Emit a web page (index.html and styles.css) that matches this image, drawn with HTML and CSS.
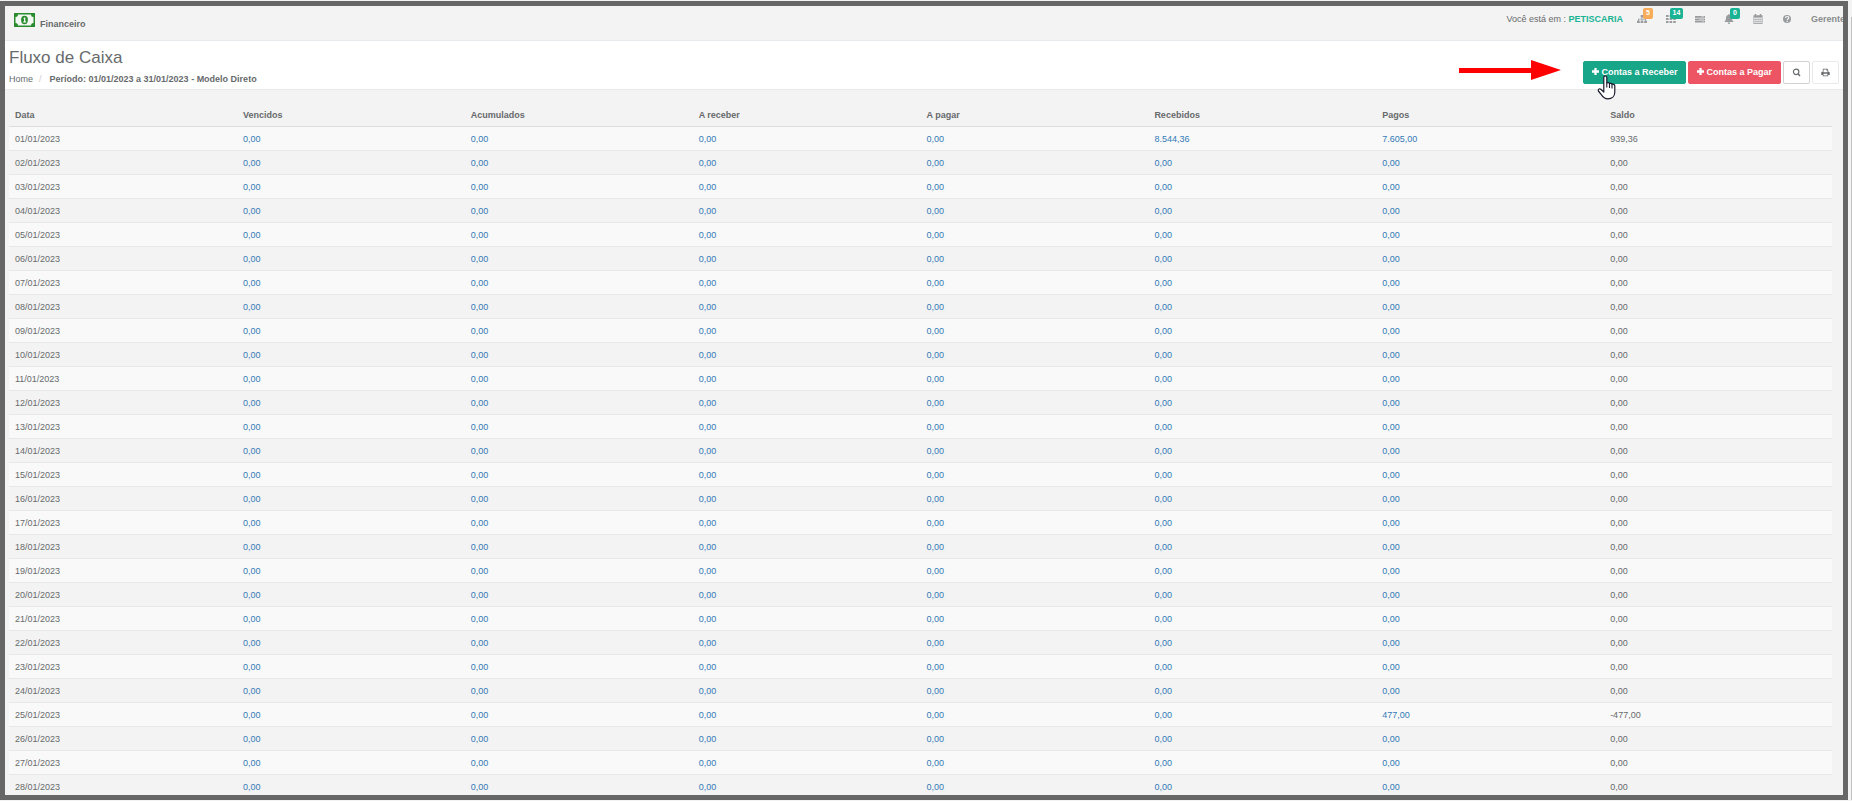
FILE: index.html
```html
<!DOCTYPE html>
<html lang="pt-BR">
<head>
<meta charset="utf-8">
<title>Fluxo de Caixa</title>
<link rel="stylesheet" href="styles.css">
</head>
<body>
<div class="frame">
  <header class="topbar">
    <a class="brand" href="#">
      <svg class="brand-icon" viewBox="0 0 21 14" aria-hidden="true">
        <rect width="21" height="14" fill="#2b8c2f"/>
        <path d="M4 1.500h13a2.500 2.500 0 0 0 2.500 2.500v6a2.500 2.500 0 0 0-2.500 2.500H4A2.500 2.500 0 0 0 1.500 10V4A2.500 2.500 0 0 0 4 1.500z" fill="#f3f8f3"/>
        <ellipse cx="10.500" cy="7" rx="3.400" ry="4.200" fill="#2b8c2f"/>
        <path d="M9.200 5.300l1.200-.9h.9v4.200h.9v.9H9.200v-.9h.9V5.600h-.9z" fill="#fff"/>
      </svg>
      <span>Financeiro</span>
    </a>
    <nav class="tools">
      <span class="place">Você está em : <strong>PETISCARIA</strong></span>
      <a class="tool" href="#" aria-label="Unidades">
        <svg viewBox="0 0 10 10"><path d="M3.700 1h2.600v2.500H5.400v1.200H9v2h1V9H7.200V6.700h.9V5.500H5.400v1.200h1V9H3.600V6.700h1V5.500H1.900v1.200h.9V9H0V6.700h1v-2h3.600V3.500h-.9z"/></svg>
        <span class="badge orange">5</span>
      </a>
      <a class="tool" href="#" aria-label="Tarefas">
        <svg viewBox="0 0 10 10"><path d="M0 1h2.600v2H0zM3.600 1h2.600v2H3.600zM7.200 1h2.600v2H7.200zM0 4h2.600v2H0zM3.600 4h2.600v2H3.600zM7.200 4h2.600v2H7.200zM0 7h2.600v2H0zM3.600 7h2.600v2H3.600zM7.200 7h2.600v2H7.200z"/></svg>
        <span class="badge wide">14</span>
      </a>
      <a class="tool" href="#" aria-label="Servidores">
        <svg viewBox="0 0 10 10"><path d="M0 2h10v1.800H0zM0 4.400h10v1.800H0zM0 6.800h10v1.800H0z"/><path d="M6 2.600h3v.6H6zM4 5h5v.6H4zM7 7.400h2v.6H7z" fill="#ddd"/></svg>
      </a>
      <a class="tool" href="#" aria-label="Avisos">
        <svg viewBox="0 0 10 10"><path d="M5 0c.5 0 .7.300.7.800C7.300 1.200 8 2.400 8 4c0 2 .6 3 1.600 3.700V8H.4v-.3C1.400 7 2 6 2 4c0-1.600.7-2.800 2.300-3.200C4.300.3 4.500 0 5 0zM3.800 8.500h2.400C6.200 9.300 5.700 10 5 10s-1.200-.7-1.200-1.500z"/></svg>
        <span class="badge">0</span>
      </a>
      <a class="tool" href="#" aria-label="Calendário">
        <svg viewBox="0 0 10 10"><path fill-rule="evenodd" d="M.5 1.200h1.200V0h1.500v1.200h3.600V0h1.500v1.200h1.200V10h-9zM1.200 3.500V5h1.500V3.500zM3.200 3.500V5h1.600V3.500zM5.300 3.500V5h1.500V3.500zM7.300 3.500V5h1.500V3.500zM1.200 5.500V7h1.500V5.500zM3.200 5.500V7h1.600V5.500zM5.300 5.500V7h1.500V5.500zM7.300 5.500V7h1.500V5.500zM1.200 7.600v1.700h1.500V7.600zM3.200 7.600v1.700h1.600V7.600zM5.300 7.600v1.700h1.500V7.600zM7.300 7.600v1.700h1.500V7.600z"/></svg>
      </a>
      <a class="tool" href="#" aria-label="Ajuda">
        <svg viewBox="0 0 10 10"><circle cx="5" cy="5" r="4"/><path d="M3.500 4c0-2 3.200-2 3.200-.1C6.700 5 5.200 4.900 5.200 6" fill="none" stroke="#f3f3f4" stroke-width="1.200"/><path d="M4.500 6.800h1.300V8H4.500z" fill="#f3f3f4"/></svg>
      </a>
      <a class="user" href="#">Gerente</a>
    </nav>
  </header>

  <section class="heading">
    <div>
      <h1>Fluxo de Caixa</h1>
      <ol class="crumbs">
        <li><a href="#">Home</a></li>
        <li class="slash" aria-hidden="true">/</li>
        <li><strong>Período: 01/01/2023 a 31/01/2023 - Modelo Direto</strong></li>
      </ol>
    </div>
    <div class="actions">
      <button class="btn receive" type="button">
        <svg viewBox="0 0 8 8"><path d="M2.700 0h2.600v2.700H8v2.600H5.300V8H2.700V5.300H0V2.700h2.700z"/></svg>
        Contas a Receber
      </button>
      <button class="btn pay" type="button">
        <svg viewBox="0 0 8 8"><path d="M2.700 0h2.600v2.700H8v2.600H5.300V8H2.700V5.300H0V2.700h2.700z"/></svg>
        Contas a Pagar
      </button>
      <button class="btn icon search" type="button" aria-label="Pesquisar">
        <svg viewBox="0 0 10 10"><circle cx="4.600" cy="4.300" r="3" fill="none" stroke="currentColor" stroke-width="1.300"/><path d="M6.600 6.400l2.300 2.400" stroke="currentColor" stroke-width="1.600"/></svg>
      </button>
      <button class="btn icon" type="button" aria-label="Imprimir">
        <svg viewBox="0 0 10 10"><path fill-rule="evenodd" d="M2 .8h4.800L8 2v2.200h.7c.6 0 1 .4 1 1v2.600H8v1.400H2V7.800H.3V5.200c0-.6.400-1 1-1H2zM2.800 1.600v3h4.400V2.800H6V1.600zM2.800 6.400v2h4.400v-2z"/></svg>
      </button>
      <svg class="arrow" viewBox="0 0 102 22" aria-hidden="true"><path d="M0 8h72V0l30 10-30 10v-7H0z" fill="#f00"/></svg>
      <svg class="cursor" viewBox="0 0 19 25" aria-hidden="true"><path d="M6.800 15V2.400a1.500 1.500 0 0 1 3 0V8c.8-.7 2.500-.5 2.700.6.800-.6 2.300-.2 2.500.8 1.100-.5 2.800-.1 2.800 1.500V17c0 4.300-3 6.800-7 6.800-3.300 0-4.800-1.600-6.500-4.200L1.400 16c-.8-1.500.9-3 2.400-1.700l3 2.700z" fill="#fff" stroke="#1a1a2e" stroke-width="1.200" stroke-linejoin="round"/><path d="M9.800 8v4.500M12.500 8.500V13M15 9.500v4" stroke="#1a1a2e" stroke-width="1.100"/></svg>
    </div>
  </section>

  <main class="content">
    <table class="cashflow">
      <thead>
        <tr><th>Data</th><th>Vencidos</th><th>Acumulados</th><th>A receber</th><th>A pagar</th><th>Recebidos</th><th>Pagos</th><th>Saldo</th></tr>
      </thead>
      <tbody id="days"></tbody>
    </table>
  </main>
</div>
<div class="scroll-edge"></div>
<script src="script.js"></script>
</body>
</html>
```
FILE: styles.css
```css
* { box-sizing: border-box; }

body {
  margin: 0;
  padding: 1px 0;
  height: 100vh;
  display: flex;
  gap: 3px;
  overflow: hidden;
  background: #f3f3f4;
  color: #676a6c;
  font: 9px/12px "Liberation Sans", Arial, sans-serif;
}

a { color: inherit; text-decoration: none; }

.frame {
  flex: 1;
  min-width: 0;
  border: 5px solid #666;
  overflow: hidden;
  background: #f3f3f3;
}

.scroll-edge {
  width: 1px;
  margin-top: 16px;
  background: #c1c1c1;
}

.topbar {
  display: flex;
  justify-content: space-between;
  height: 35px;
  border-bottom: 1px solid #e7eaec;
}

.brand {
  display: flex;
  gap: 5px;
  padding: 7px 0 0 9px;
  font-weight: bold;
}
.brand span { padding-top: 5px; }
.brand-icon { width: 21px; height: 14px; }

.tools {
  display: flex;
  align-items: flex-start;
  padding-top: 7px;
  white-space: nowrap;
}
.place { margin-right: 14px; }
.place strong { color: #1ab394; }

.tool {
  position: relative;
  width: 10px;
  height: 12px;
  margin-right: 19px;
  padding-top: 1px;
  color: #999c9e;
}
.tool svg { display: block; width: 10px; height: 10px; fill: currentColor; }

.badge {
  position: absolute;
  left: 6px;
  top: -5px;
  width: 10px;
  height: 11px;
  border-radius: 2px;
  background: #1ab394;
  color: #fff;
  font-size: 7px;
  font-weight: bold;
  line-height: 10px;
  text-align: center;
}
.badge.wide { left: 4px; width: 13px; }
.badge.orange { background: #f8ac59; }

.user { width: 32px; color: #888b8d; font-weight: bold; }

.heading {
  display: flex;
  justify-content: space-between;
  align-items: flex-start;
  height: 49px;
  padding: 7px 4px 0 4px;
  border-bottom: 1px solid #e7eaec;
  background: #fff;
}

h1 {
  margin: 0;
  font-size: 17px;
  font-weight: normal;
  line-height: 20px;
}

.crumbs {
  display: flex;
  margin: 5px 0 0;
  padding: 0;
  list-style: none;
}
.slash { padding: 0 8px 0 6px; color: #ccc; }

.actions {
  position: relative;
  display: flex;
  gap: 2px;
  padding-top: 13px;
}

.btn {
  display: flex;
  align-items: center;
  justify-content: center;
  gap: 2px;
  height: 23px;
  padding: 0 8px 2px;
  border: 1px solid #e7eaec;
  border-radius: 2px;
  background: #fff;
  color: #676a6c;
  font: bold 9px/12px "Liberation Sans", Arial, sans-serif;
  white-space: nowrap;
}
.btn svg { width: 7px; height: 7px; fill: currentColor; }
.btn.receive { border-color: #18a689; background: #18a689; color: #fff; }
.btn.pay { border-color: #ed5565; background: #ed5565; color: #fff; }
.btn.icon { width: 27px; padding: 0 0 1px; }
.btn.icon svg { width: 9px; height: 9px; }
.btn.search { border-color: #d2d2d2; }

.arrow {
  position: absolute;
  right: 278px;
  top: 12px;
  width: 102px;
  height: 22px;
}
.cursor {
  position: absolute;
  right: 223px;
  top: 27px;
  width: 19px;
  height: 25px;
}

.content { padding: 18px 11px 0 4px; }

.cashflow {
  width: 100%;
  table-layout: fixed;
  border-collapse: separate;
  border-spacing: 0;
}
.cashflow th,
.cashflow td {
  padding: 6px 6px 5px;
  text-align: left;
}
.cashflow thead th {
  padding: 1px 6px 5px;
  border-bottom: 1px solid #ddd;
}
.cashflow td { border-bottom: 1px solid #e7e7e8; }
.cashflow tbody tr:nth-child(odd) { background: #f9f9f9; }
.cashflow a { color: #337ab7; }
```
FILE: script.js
```js
const DAYS = 28;
const ZERO = "0,00";
const entries = {
  1: { recebidos: "8.544,36", pagos: "7.605,00", saldo: "939,36" },
  25: { pagos: "477,00", saldo: "-477,00" }
};

const body = document.getElementById("days");
for (let day = 1; day <= DAYS; day++) {
  const e = entries[day] || {};
  const links = [ZERO, ZERO, ZERO, ZERO, e.recebidos || ZERO, e.pagos || ZERO];
  const row = body.insertRow();
  row.insertCell().textContent = String(day).padStart(2, "0") + "/01/2023";
  for (const value of links) {
    const link = document.createElement("a");
    link.href = "#";
    link.textContent = value;
    row.insertCell().append(link);
  }
  row.insertCell().textContent = e.saldo || ZERO;
}
```
